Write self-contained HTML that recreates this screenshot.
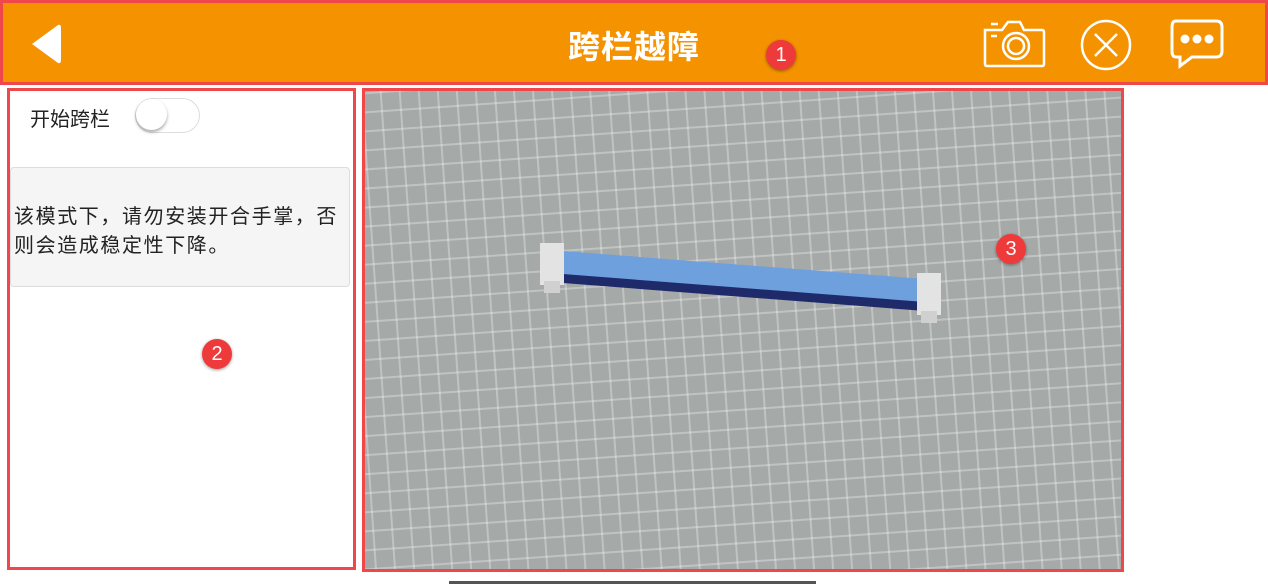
<!DOCTYPE html>
<html style="overflow:hidden"><head><meta charset="utf-8"><style>
html,body{margin:0;width:1268px;height:584px;overflow:hidden}
body{background:#fff;position:relative;font-family:"Liberation Sans","Noto Sans CJK SC",sans-serif}
.hdr{position:absolute;left:0;top:0;width:1262px;height:79px;background:#f59200;border:3px solid #f0484a}
.title{position:absolute;left:0;width:1268px;top:22px;text-align:center;color:#fff;font-size:32px;font-weight:bold;letter-spacing:1px}
.badge{position:absolute;width:30px;height:30px;border-radius:50%;background:#ee3a3a;color:#fff;font-size:20px;text-align:center;line-height:30px;box-shadow:0 1px 3px rgba(0,0,0,.4)}
.left{position:absolute;left:7px;top:88px;width:343px;height:476px;border:3px solid #f0484a;background:#fff;overflow:hidden}
.img{position:absolute;left:362px;top:88px;width:756px;height:478px;border:3px solid #f0484a;overflow:hidden;background:#a5a9a8}
.grid{position:absolute;left:-100px;top:-100px;width:1000px;height:700px;transform:rotate(-4deg);
background-image:linear-gradient(90deg,rgba(255,255,255,.3) 2px,transparent 2px),linear-gradient(0deg,rgba(255,255,255,.3) 2px,transparent 2px);background-size:19px 19px}
</style></head><body>
<div class="hdr"></div>
<svg style="position:absolute;left:28px;top:22px" width="36" height="44"><path d="M4 22 L30 3 Q33 2 33 6 L33 38 Q33 42 30 41 Z" fill="#fff"/></svg>
<div class="title">跨栏越障</div>
<svg style="position:absolute;left:982px;top:18px" width="64" height="50" fill="none" stroke="#fff" stroke-width="2.5"><path d="M3 12 H20 L26 4 H38 L42 12 H60 Q62 12 62 14 V46 Q62 48 60 48 H5 Q3 48 3 46 Z"/><circle cx="34" cy="28" r="13"/><circle cx="34" cy="28" r="8"/><path d="M9 18 H15 M9 6 H16"/></svg>
<svg style="position:absolute;left:1080px;top:19px" width="52" height="52" fill="none" stroke="#fff" stroke-width="2.5"><circle cx="26" cy="26" r="24"/><path d="M15 15 L37 37 M37 15 L15 37"/></svg>
<svg style="position:absolute;left:1170px;top:19px" width="54" height="50"><path d="M6 2 H46 Q52 2 52 8 V32 Q52 38 46 38 H22 L10 47 V38 H6 Q2 38 2 32 V8 Q2 2 6 2 Z" fill="none" stroke="#fff" stroke-width="3"/><circle cx="15" cy="20" r="4.5" fill="#fff"/><circle cx="27" cy="20" r="4.5" fill="#fff"/><circle cx="39" cy="20" r="4.5" fill="#fff"/></svg>
<div class="badge" style="left:766px;top:40px">1</div>
<div class="left">
<div style="position:absolute;left:20px;top:12px;font-size:20px;color:#222">开始跨栏</div>
<div style="position:absolute;left:125px;top:7px;width:63px;height:33px;border:1px solid #ddd;border-radius:18px;background:#fff"></div>
<div style="position:absolute;left:126px;top:8px;width:31px;height:31px;border-radius:50%;background:#fff;box-shadow:0 2px 3px rgba(0,0,0,.35)"></div>
<div style="position:absolute;left:0;top:76px;width:340px;height:120px;background:#f5f5f5;border:1px solid #ddd;border-radius:4px;box-sizing:border-box"></div>
<div style="position:absolute;left:4px;top:112px;width:340px;font-size:20px;line-height:29px;color:#222;letter-spacing:1.6px">该模式下，请勿安装开合手掌，否<br>则会造成稳定性下降。</div>
</div>
<div class="badge" style="left:202px;top:339px">2</div>
<div class="img"><div class="grid"></div>
<svg style="position:absolute;left:0;top:0" width="756" height="478">
<polygon points="198,163 560,191 560,220 198,192" fill="#1e2a6a"/>
<polygon points="198,160 560,188 560,211 198,183" fill="#6ea0de"/>
<rect x="175" y="152" width="24" height="42" fill="#e3e3e3"/><rect x="179" y="190" width="16" height="12" fill="#d0d0d0"/>
<rect x="552" y="182" width="24" height="42" fill="#e3e3e3"/><rect x="556" y="220" width="16" height="12" fill="#d0d0d0"/>
</svg></div>
<div class="badge" style="left:996px;top:234px">3</div>
<div style="position:absolute;left:449px;top:581px;width:367px;height:3px;background:#555"></div>
</body></html>
